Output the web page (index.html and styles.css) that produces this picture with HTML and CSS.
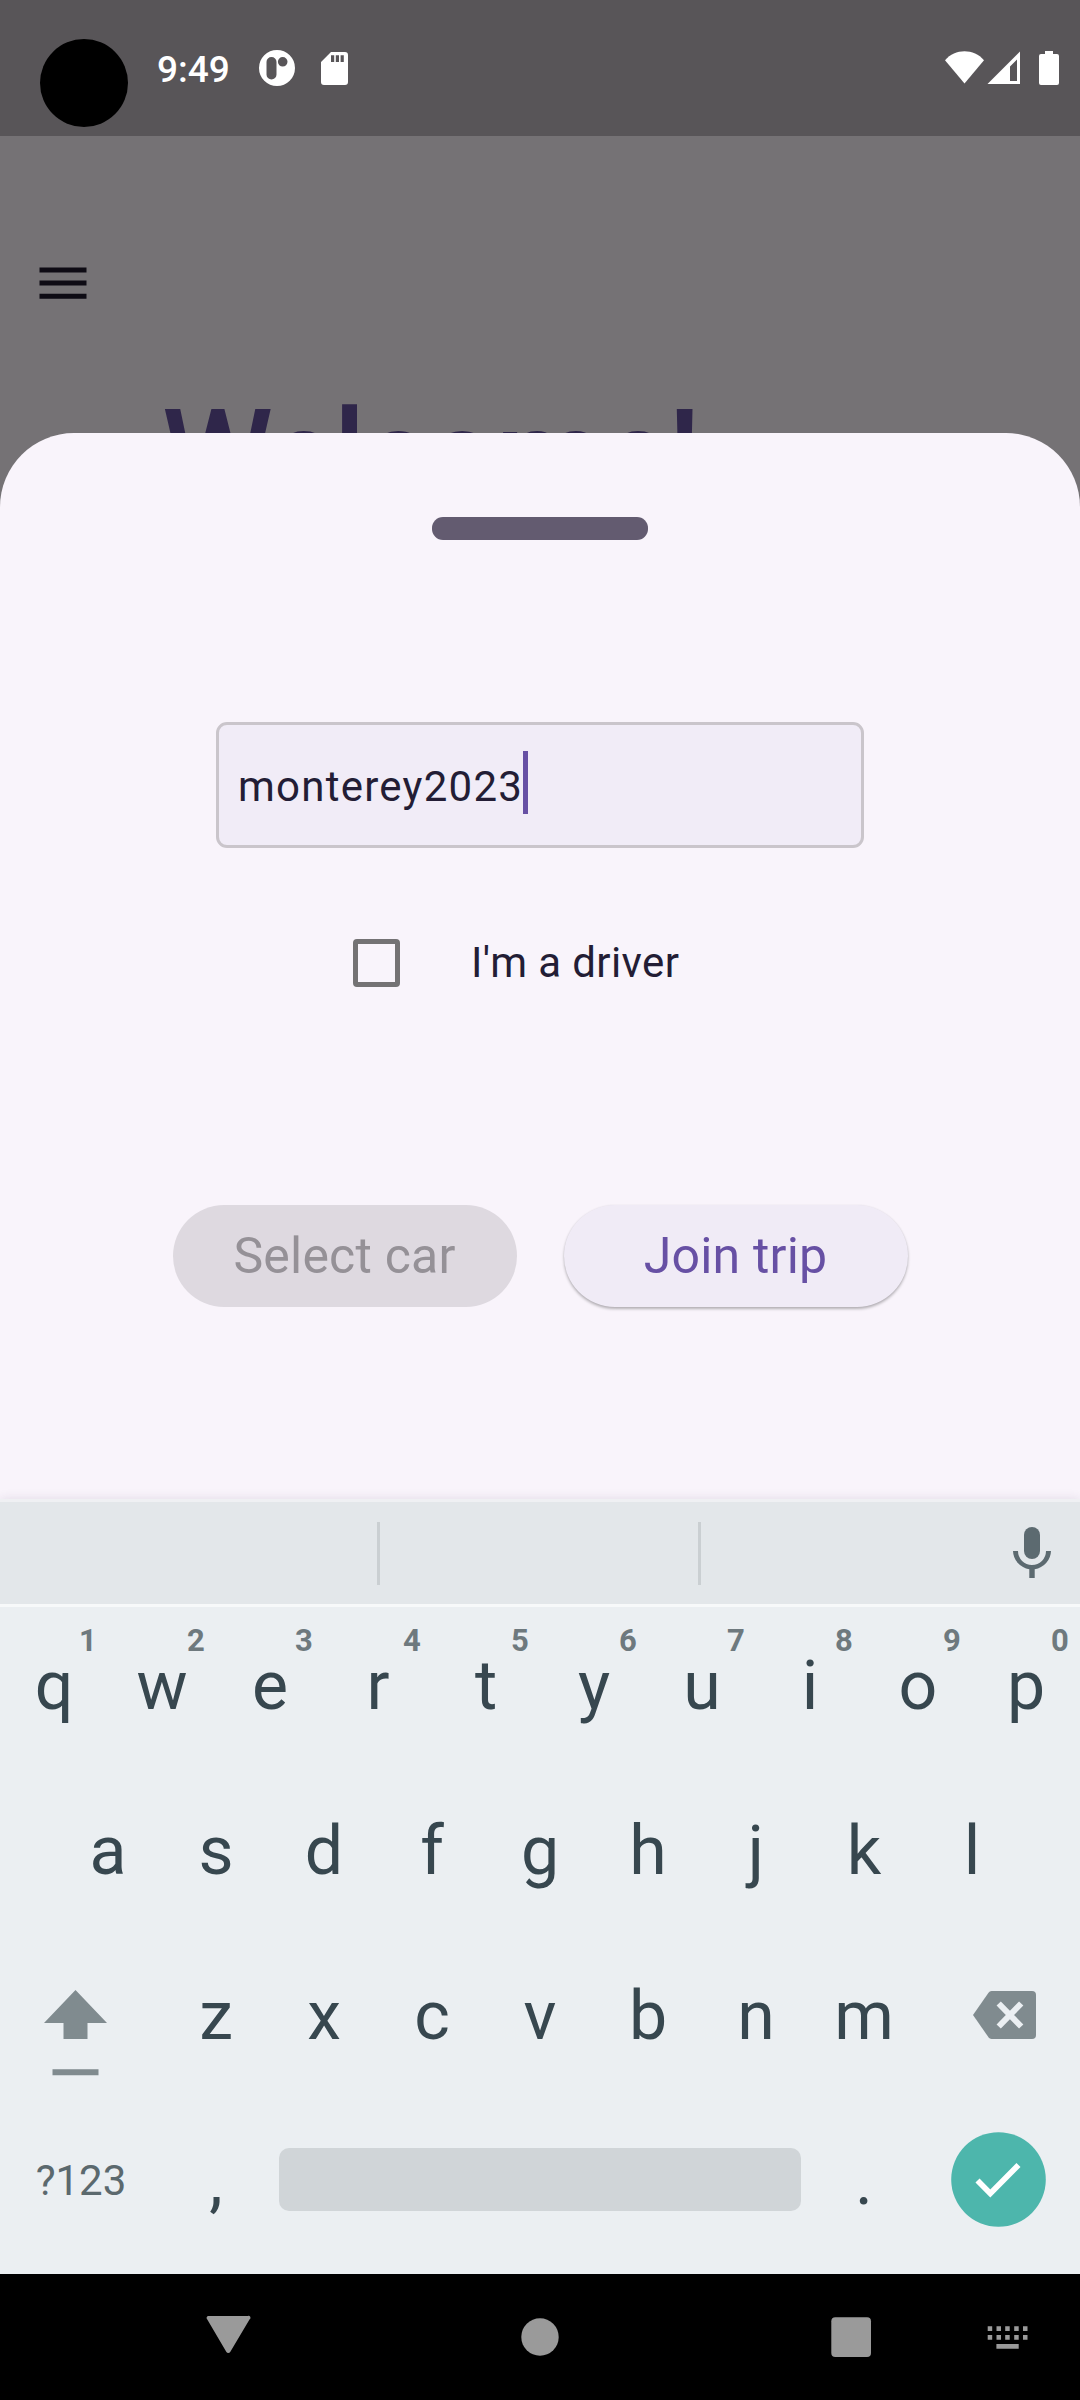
FILE: index.html
```html
<!DOCTYPE html>
<html lang="en">
<head>
<meta charset="utf-8">
<title>Join trip</title>
<link rel="stylesheet" href="styles.css">
</head>
<body>
<div class="screen">
  <header class="status">
    <span class="camera"></span>
    <span class="clock">9:49</span>
    <svg class="notif" viewBox="0 0 36 36"><path fill-rule="evenodd" d="M18 0a18 18 0 1 0 0 36a18 18 0 0 0 0-36zM12.500 7a5 5 0 0 1 5 5v12.500a5 5 0 0 1-10 0V12a5 5 0 0 1 5-5zM23.700 7a4.800 4.800 0 1 1 0 9.600a4.800 4.800 0 0 1 0-9.600z"/></svg>
    <svg class="sd" viewBox="0 0 27 33"><path fill-rule="evenodd" d="M10 0h14a3 3 0 0 1 3 3v27a3 3 0 0 1-3 3H3a3 3 0 0 1-3-3V10zM10 3.300v6.700h3.200V3.300zM14.800 3.300v6.700h3.200V3.300zM19.600 3.300v6.700h3.200V3.300z"/></svg>
    <svg class="signals" viewBox="0 0 115 34"><path d="M0 9.300C10-2.800 29-2.800 39 9.300L19.500 32.500z"/><path fill-rule="evenodd" d="M75 .500V33H42.500zM72 8.500L65 15.500V30h7z"/><path d="M100 0h8v3h4a2 2 0 0 1 2 2v27a2 2 0 0 1-2 2H96a2 2 0 0 1-2-2V5a2 2 0 0 1 2-2h4z"/></svg>
  </header>

  <main class="page">
    <svg class="menu" viewBox="0 0 48 32"><path d="M.500 .500h47v5H.500zM.500 13.500h47v5H.500zM.500 26.700h47v5H.500z"/></svg>
    <h1 class="title">Welcome!</h1>
  </main>

  <section class="sheet">
    <div class="handle"></div>
    <div class="field"><span class="value">monterey2023</span><span class="caret"></span></div>
    <label class="driver"><span class="box"></span><span>I'm a driver</span></label>
    <div class="actions">
      <button class="btn btn-off" disabled>Select car</button>
      <button class="btn btn-join">Join trip</button>
    </div>
  </section>

  <section class="keyboard">
    <div class="suggest">
      <span class="divider"></span><span class="divider"></span>
      <svg class="mic" viewBox="0 0 38 51"><rect x="11" y="0" width="16" height="32" rx="8"/><path d="M0 24h5a14 14 0 0 0 28 0h5a19 19 0 0 1-16.300 18.200V51h-5.400v-8.800A19 19 0 0 1 0 24z"/></svg>
    </div>
    <div class="row">
      <div class="key">q<sup>1</sup></div><div class="key">w<sup>2</sup></div><div class="key">e<sup>3</sup></div><div class="key">r<sup>4</sup></div><div class="key">t<sup>5</sup></div><div class="key">y<sup>6</sup></div><div class="key">u<sup>7</sup></div><div class="key">i<sup>8</sup></div><div class="key">o<sup>9</sup></div><div class="key">p<sup>0</sup></div>
    </div>
    <div class="row">
      <div class="key">a</div><div class="key">s</div><div class="key">d</div><div class="key">f</div><div class="key">g</div><div class="key">h</div><div class="key">j</div><div class="key">k</div><div class="key">l</div>
    </div>
    <div class="row">
      <div class="key wide shift"><svg viewBox="0 0 64 86"><path d="M31.500 0L63 33H43.500v16h-24V33H0zM8.500 79.300h46v6h-46z"/></svg></div>
      <div class="key">z</div><div class="key">x</div><div class="key">c</div><div class="key">v</div><div class="key">b</div><div class="key">n</div><div class="key">m</div>
      <div class="key wide back"><svg viewBox="0 0 63 48"><path d="M18.500 0H59a4 4 0 0 1 4 4v40a4 4 0 0 1-4 4H18.500a4 4 0 0 1-3-1.700L0 24L15.500 1.700A4 4 0 0 1 18.500 0z"/><path class="cross" d="M25.700 12.500l22.500 23M48.200 12.500L25.700 35.500"/></svg></div>
    </div>
    <div class="row">
      <div class="key wide symbols">?123</div>
      <div class="key punct">,</div>
      <div class="space"></div>
      <div class="key punct">.</div>
      <div class="key wide enter"><svg viewBox="0 0 95 95"><circle cx="47.500" cy="47.500" r="47.300"/><path d="M26.500 48.500L39.300 61.500L67.500 33"/></svg></div>
    </div>
  </section>

  <nav class="navbar">
    <svg viewBox="0 0 1080 126"><path d="M209 42h38.500a2 2 0 0 1 2 3.500L230.200 78a2.200 2.200 0 0 1-3.800 0L207.300 45.500a2 2 0 0 1 1.700-3.500z"/><circle cx="540" cy="63" r="18.700"/><rect x="831.300" y="43.200" width="39.700" height="39.700" rx="4"/><path d="M987.700 52.200h4.500v4.800h-4.500zM996.500 52.200h4.500v4.800h-4.500zM1005.200 52.200h4.500v4.800h-4.500zM1014.200 52.200h4.500v4.800h-4.500zM1023 52.200h4.500v4.800h-4.500zM987.700 61h4.500v4.800h-4.500zM996.500 61h4.500v4.800h-4.500zM1005.200 61h4.500v4.800h-4.500zM1014.200 61h4.500v4.800h-4.500zM1023 61h4.500v4.800h-4.500zM996.400 70h22.300v4.800h-22.300z"/></svg>
  </nav>
</div>
</body>
</html>
```
FILE: styles.css
```css
* { box-sizing: border-box; }
body { margin: 0; font-family: Roboto, sans-serif; }
svg { display: block; flex: none; overflow: visible; }

.screen {
  width: 1080px;
  height: 2400px;
  display: flex;
  flex-direction: column;
  overflow: hidden;
  background: #757275;
}

/* Status bar */
.status {
  height: 136px;
  flex: none;
  display: flex;
  align-items: flex-start;
  background: #585558;
  color: #fff;
  fill: #fff;
}
.camera { width: 88px; height: 88px; margin: 39px 0 0 40px; border-radius: 50%; background: #000; }
.clock { width: 72px; margin: 48px 0 0 29px; font-size: 37px; line-height: 44px; font-weight: 500; white-space: nowrap; }
.notif { width: 36px; height: 36px; margin: 50px 0 0 30px; }
.sd { width: 27px; height: 33px; margin: 52px 0 0 26px; }
.signals { width: 115px; height: 34px; margin: 51px 20px 0 auto; }

/* Dimmed page behind the sheet */
.page { height: 297px; flex: none; padding: 131px 0 0 39px; }
.menu { width: 48px; height: 32px; fill: #0e0b14; }
.title { margin: 88px 0 0 123px; font-size: 126px; line-height: 138px; font-weight: 500; letter-spacing: -2.5px; color: #2f264a; white-space: nowrap; }

/* Bottom sheet */
.sheet {
  position: relative;
  height: 1066px;
  flex: none;
  display: flex;
  flex-direction: column;
  align-items: center;
  padding-top: 84px;
  background: #f9f4fb;
  border-radius: 74px 74px 0 0;
}
.handle { width: 216px; height: 23px; flex: none; border-radius: 11px; background: #635b70; }
.field {
  width: 648px;
  height: 126px;
  margin-top: 182px;
  flex: none;
  display: flex;
  align-items: flex-start;
  padding: 26px 0 0 19px;
  border: 3px solid #cac5cb;
  border-radius: 11px;
  background: #f1ecf7;
}
.value { margin-top: 11px; font-size: 42px; line-height: 50px; letter-spacing: 1.25px; color: #231d35; }
.caret { width: 5px; height: 63px; background: #6750a4; }
.driver { width: 374px; height: 48px; margin-top: 91px; flex: none; display: flex; align-items: center; gap: 71px; font-size: 42px; line-height: 48px; letter-spacing: .4px; color: #231d35; white-space: nowrap; }
.box { width: 47px; height: 48px; flex: none; border: 5px solid #747274; border-radius: 4px; }
.actions { display: flex; gap: 47px; margin-top: 218px; }
.btn { width: 344px; height: 102px; padding: 0; border: 0; border-radius: 51px; font: 400 50px/100px Roboto, sans-serif; letter-spacing: .2px; }
.btn-off { background: #ded9e0; color: #959197; }
.btn-join { background: #f0ebf6; color: #6750a4; box-shadow: 0 2px 3px rgba(0, 0, 0, .28), 0 0 2px rgba(0, 0, 0, .06); }

/* Keyboard */
.keyboard {
  position: relative;
  height: 775px;
  flex: none;
  background: #ebeff2;
  color: #37474f;
  box-shadow: 0 0 10px rgba(60, 40, 80, .12);
}
.suggest {
  height: 108px;
  display: flex;
  align-items: flex-start;
  padding: 20px 29px 0 377px;
  gap: 318px;
  background: #e3e7ea;
  border-top: 3px solid #eff0f3;
  border-bottom: 3px solid #f7f9fa;
}
.divider { width: 3px; height: 63px; flex: none; background: #cacfd2; }
.mic { width: 38px; height: 51px; margin: 5px 0 0 -6px; fill: #5c6a70; }
.row { height: 165px; display: flex; justify-content: center; }
.key { position: relative; width: 108px; flex: none; text-align: center; font-size: 68px; line-height: 80px; padding-top: 39px; }
.key sup { position: absolute; left: 66px; top: 16px; width: 44px; font-size: 31px; line-height: 36px; font-weight: 700; color: #6e797e; }
.wide { width: 162px; }
.shift { padding: 53px 0 0 44px; fill: #808b8f; }
.shift svg { width: 64px; height: 86px; }
.back { padding: 54px 0 0 55px; fill: #808b8f; }
.back svg { width: 63px; height: 48px; }
.cross { stroke: #ebeff2; stroke-width: 6; }
.symbols { padding: 54px 0 0; font-size: 42px; line-height: 50px; color: #5b696e; }
.punct { padding-top: 39px; }
.space { width: 522px; height: 63px; margin: 46px 9px 0; border-radius: 10px; background: #d0d5d8; }
.enter { padding: 30px 0 0 33px; fill: #4db6ac; }
.enter svg { width: 95px; height: 95px; }
.enter path { fill: none; stroke: #fff; stroke-width: 5.700; }

/* System navigation */
.navbar { position: relative; height: 126px; flex: none; background: #000; fill: #9a9a9a; }
.navbar svg { width: 1080px; height: 126px; }
```
